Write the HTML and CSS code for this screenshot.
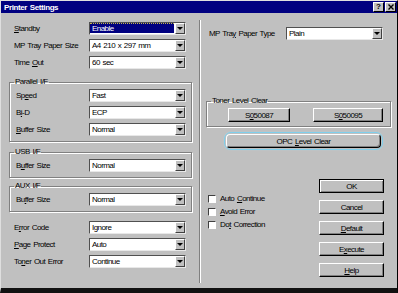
FILE: index.html
```html
<!DOCTYPE html>
<html>
<head>
    <link rel="stylesheet" href="styles.css">
    <title>Printer Settings</title>
</head>
<body>
    <div class="window">
        <div class="titlebar">
            <span class="title">Printer Settings</span>
            <div class="title-buttons">
                <span class="tbtn">?</span>
                <span class="tbtn">
                    <svg width="6" height="6" viewBox="0 0 6 6"><path d="M0.5 0.5L5.5 5.5M5.5 0.5L0.5 5.5" stroke="#000" stroke-width="1.4"/></svg>
                </span>
            </div>
        </div>
        <div class="content">
            <div class="left-panel">
                <div class="row">
                    <label><u>S</u>tandby</label>
                    <div class="combo"><span class="value selected">Enable</span><span class="arrow"></span></div>
                </div>
                <div class="row">
                    <label>MP Tray Paper Size</label>
                    <div class="combo"><span class="value">A4 210 x 297 mm</span><span class="arrow"></span></div>
                </div>
                <div class="row">
                    <label>Time <u>O</u>ut</label>
                    <div class="combo"><span class="value">60 sec</span><span class="arrow"></span></div>
                </div>

                <fieldset class="parallel">
                    <legend>Parallel I/F</legend>
                    <div class="row">
                        <label>Sp<u>e</u>ed</label>
                        <div class="combo"><span class="value">Fast</span><span class="arrow"></span></div>
                    </div>
                    <div class="row">
                        <label>B<u>i</u>-D</label>
                        <div class="combo"><span class="value">ECP</span><span class="arrow"></span></div>
                    </div>
                    <div class="row">
                        <label><u>B</u>uffer Size</label>
                        <div class="combo"><span class="value">Normal</span><span class="arrow"></span></div>
                    </div>
                </fieldset>

                <fieldset class="usb">
                    <legend>USB I/F</legend>
                    <div class="row">
                        <label>B<u>u</u>ffer Size</label>
                        <div class="combo"><span class="value">Normal</span><span class="arrow"></span></div>
                    </div>
                </fieldset>

                <fieldset class="aux">
                    <legend>AUX I/F</legend>
                    <div class="row">
                        <label>Bu<u>f</u>fer Size</label>
                        <div class="combo"><span class="value">Normal</span><span class="arrow"></span></div>
                    </div>
                </fieldset>

                <div class="row after-group">
                    <label>E<u>r</u>ror Code</label>
                    <div class="combo"><span class="value">Ignore</span><span class="arrow"></span></div>
                </div>
                <div class="row">
                    <label><u>P</u>age Protect</label>
                    <div class="combo"><span class="value">Auto</span><span class="arrow"></span></div>
                </div>
                <div class="row">
                    <label>To<u>n</u>er Out Error</label>
                    <div class="combo"><span class="value">Continue</span><span class="arrow"></span></div>
                </div>
            </div>

            <div class="divider"></div>

            <div class="right-panel">
                <div class="row">
                    <label>MP Tra<u>y</u> Paper Type</label>
                    <div class="combo"><span class="value">Plain</span><span class="arrow"></span></div>
                </div>

                <fieldset class="toner">
                    <legend>Toner Level Clear</legend>
                    <div class="toner-buttons">
                        <button class="btn s1"><span>S<u>0</u>50087</span></button>
                        <button class="btn s2"><span>S<u>0</u>50095</span></button>
                    </div>
                </fieldset>

                <div class="focus-ring">
                    <button class="btn opc"><span>OPC <u>L</u>evel Clear</span></button>
                </div>

                <div class="bottom">
                    <div class="checks">
                        <div class="check"><span class="box"></span><span>Auto <u>C</u>ontinue</span></div>
                        <div class="check"><span class="box"></span><span><u>A</u>void Error</span></div>
                        <div class="check"><span class="box"></span><span>Do<u>t</u> Correction</span></div>
                    </div>
                    <div class="actions">
                        <button class="btn default"><span>OK</span></button>
                        <button class="btn"><span>Cancel</span></button>
                        <button class="btn"><span><u>D</u>efault</span></button>
                        <button class="btn"><span>E<u>x</u>ecute</span></button>
                        <button class="btn"><span><u>H</u>elp</span></button>
                    </div>
                </div>
            </div>
        </div>
    </div>
</body>
</html>
```

FILE: styles.css
```css
body {
    margin: 0;
    font-family: "Liberation Sans", Arial, sans-serif;
    font-size: 8px;
    letter-spacing: -0.55px;
    word-spacing: 1px;
    color: #000;
}
.window {
    width: 398px;
    height: 293px;
    box-sizing: border-box;
    background-color: #c0c0c0;
    border-top: 1px solid #dfdfdf;
    border-left: 1px solid #dfdfdf;
    border-right: 1px solid #000;
    border-bottom: 5px solid #111;
    display: flex;
    flex-direction: column;
}
.titlebar {
    height: 12px;
    background-color: #000080;
    color: #fff;
    display: flex;
    align-items: center;
    padding: 0 1px 0 3px;
}
.title {
    font-weight: bold;
    letter-spacing: -0.4px;
}
.title-buttons {
    margin-left: auto;
    display: flex;
    gap: 1px;
}
.tbtn {
    width: 11px;
    height: 10px;
    box-sizing: border-box;
    background-color: #c0c0c0;
    border: 1px solid;
    border-color: #fff #000 #000 #fff;
    color: #000;
    font-weight: bold;
    line-height: 8px;
    letter-spacing: 0;
    display: flex;
    align-items: center;
    justify-content: center;
}
.content {
    flex: 1;
    display: flex;
}
.left-panel {
    width: 199px;
    box-sizing: border-box;
    padding: 9px 13px 0 13px;
}
.divider {
    width: 2px;
    box-sizing: border-box;
    border-left: 1px solid #808080;
    border-right: 1px solid #fff;
    margin: 7px 0 5px;
}
.right-panel {
    flex: 1;
    padding: 14px 14px 0 8px;
}
.row {
    display: flex;
    align-items: center;
    height: 13px;
}
.row + .row {
    margin-top: 4px;
}
.row label {
    flex: 1;
}
.combo {
    width: 97px;
    height: 13px;
    box-sizing: border-box;
    border: 1px solid;
    border-color: #505050 #e8e8e8 #e8e8e8 #505050;
    background-color: #fff;
    display: flex;
}
.value {
    flex: 1;
    padding-left: 2px;
    line-height: 11px;
}
.value.selected {
    background-color: #000080;
    color: #fff;
    margin: 0 1px 1px 0;
    padding-left: 2px;
    line-height: 9px;
    border-top: 1px dotted #c8b84a;
}
.arrow {
    width: 10px;
    box-sizing: border-box;
    background-color: #c0c0c0;
    border: 1px solid;
    border-color: #fff #404040 #404040 #fff;
    display: flex;
    align-items: center;
    justify-content: center;
}
.arrow::after {
    content: "";
    border-top: 3px solid #000;
    border-left: 3px solid transparent;
    border-right: 3px solid transparent;
}
fieldset {
    margin: 9px -6px 0 -5px;
    padding: 3px 5px 5px 6px;
    border: 1px solid #808080;
    box-shadow: inset 1px 1px #fff, 1px 1px #fff;
}
legend {
    padding: 0 1px;
    margin-left: -2px;
    line-height: 8px;
}
fieldset.usb {
    margin-top: 6px;
}
fieldset.aux {
    margin-top: 4px;
}
.row.after-group {
    margin-top: 9px;
}
fieldset.toner {
    margin: 57px -8px 0 -3px;
    padding: 3px 0 4px 6px;
}
.toner-buttons {
    display: flex;
}
.btn {
    height: 14px;
    box-sizing: border-box;
    margin: 0;
    padding: 0;
    background-color: #c0c0c0;
    border: 1px solid;
    border-color: #fff #000 #000 #fff;
    box-shadow: inset -1px -1px #808080;
    font: inherit;
    letter-spacing: inherit;
    word-spacing: inherit;
    color: #000;
    display: flex;
    align-items: center;
    justify-content: center;
}
.btn.s1 {
    width: 62px;
    margin-left: 15px;
}
.btn.s2 {
    width: 70px;
    margin-left: 23px;
}
.btn.default {
    border-color: #000;
    box-shadow: inset 1px 1px #fff, inset -1px -1px #808080;
}
.focus-ring {
    width: 159px;
    box-sizing: border-box;
    margin: 5px 0 0 15px;
    padding: 1px;
    border: 1px solid #7fcfec;
    border-radius: 7px;
    box-shadow: 0 0 1px #a8e2f5;
}
.btn.opc {
    width: 100%;
    border-radius: 4px;
}
.bottom {
    display: flex;
    margin-top: 29px;
}
.checks {
    margin: 13px 0 0 -1px;
}
.check {
    display: flex;
    align-items: center;
    height: 13px;
}
.box {
    width: 8px;
    height: 8px;
    box-sizing: border-box;
    border: 1px solid;
    border-color: #404040 #fff #fff #404040;
    background-color: #fff;
    margin-right: 4px;
}
.actions {
    margin-left: auto;
    margin-right: -1px;
    width: 65px;
    display: flex;
    flex-direction: column;
}
.actions .btn + .btn {
    margin-top: 7px;
}
```
